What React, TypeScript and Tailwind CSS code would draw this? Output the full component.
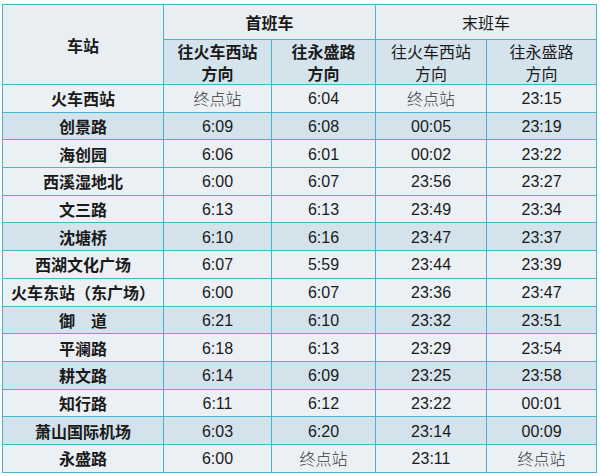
const rows: [string, string, string, string, string, boolean][] = [
  ["火车西站", "终点站", "6:04", "终点站", "23:15", false],
  ["创景路", "6:09", "6:08", "00:05", "23:19", true],
  ["海创园", "6:06", "6:01", "00:02", "23:22", false],
  ["西溪湿地北", "6:00", "6:07", "23:56", "23:27", false],
  ["文三路", "6:13", "6:13", "23:49", "23:34", false],
  ["沈塘桥", "6:10", "6:16", "23:47", "23:37", true],
  ["西湖文化广场", "6:07", "5:59", "23:44", "23:39", false],
  ["火车东站（东广场）", "6:00", "6:07", "23:36", "23:47", false],
  ["御　道", "6:21", "6:10", "23:32", "23:51", true],
  ["平澜路", "6:18", "6:13", "23:29", "23:54", false],
  ["耕文路", "6:14", "6:09", "23:25", "23:58", true],
  ["知行路", "6:11", "6:12", "23:22", "00:01", false],
  ["萧山国际机场", "6:03", "6:20", "23:14", "00:09", true],
  ["永盛路", "6:00", "终点站", "23:11", "终点站", false],
];

const cell = "border-[1.5px] border-[#48b4c8] text-center align-middle p-0";

function Time({ v }: { v: string }) {
  if (v === "终点站") {
    return <span className="text-[16px] text-[#3a3a3a] font-light">{v}</span>;
  }
  return <span className="font-['Liberation_Sans',sans-serif] text-[16px]">{v}</span>;
}

function Sub({ top, bold }: { top: string; bold: boolean }) {
  return (
    <th className={`${cell} bg-[#d5e3ec] text-[16px] ${bold ? "font-bold" : "font-normal"}`}>
      <div className="flex flex-col items-center leading-[22px]">
        <span>{top}</span>
        <span>方向</span>
      </div>
    </th>
  );
}

export default function App() {
  return (
    <div className="bg-white w-[600px] h-[476px] pt-[4px] pl-[2px] font-['Noto_Sans_CJK_SC',sans-serif] text-[#1a1a1a]">
      <table className="border-collapse table-fixed w-[594px]">
        <colgroup>
          <col className="w-[161px]" />
          <col className="w-[108px]" />
          <col className="w-[104px]" />
          <col className="w-[111px]" />
          <col className="w-[110px]" />
        </colgroup>
        <thead>
          <tr className="h-[35px] bg-[#e9eef3]">
            <th rowSpan={2} className={`${cell} text-[16px] font-bold`}>车站</th>
            <th colSpan={2} className={`${cell} text-[16px] font-bold`}>首班车</th>
            <th colSpan={2} className={`${cell} text-[16px] font-normal`}>末班车</th>
          </tr>
          <tr className="h-[45px]">
            <Sub top="往火车西站" bold />
            <Sub top="往永盛路" bold />
            <Sub top="往火车西站" bold={false} />
            <Sub top="往永盛路" bold={false} />
          </tr>
        </thead>
        <tbody>
          {rows.map(([name, a, b, c, d, blue]) => (
            <tr key={name} className={`h-[27.7px] ${blue ? "bg-[#d3e2eb]" : "bg-[#ebf0f4]"}`}>
              <td className={`${cell} text-[16px] font-bold leading-none`}>{name}</td>
              <td className={`${cell} leading-none`}><Time v={a} /></td>
              <td className={`${cell} leading-none`}><Time v={b} /></td>
              <td className={`${cell} leading-none`}><Time v={c} /></td>
              <td className={`${cell} leading-none`}><Time v={d} /></td>
            </tr>
          ))}
        </tbody>
      </table>
    </div>
  );
}
